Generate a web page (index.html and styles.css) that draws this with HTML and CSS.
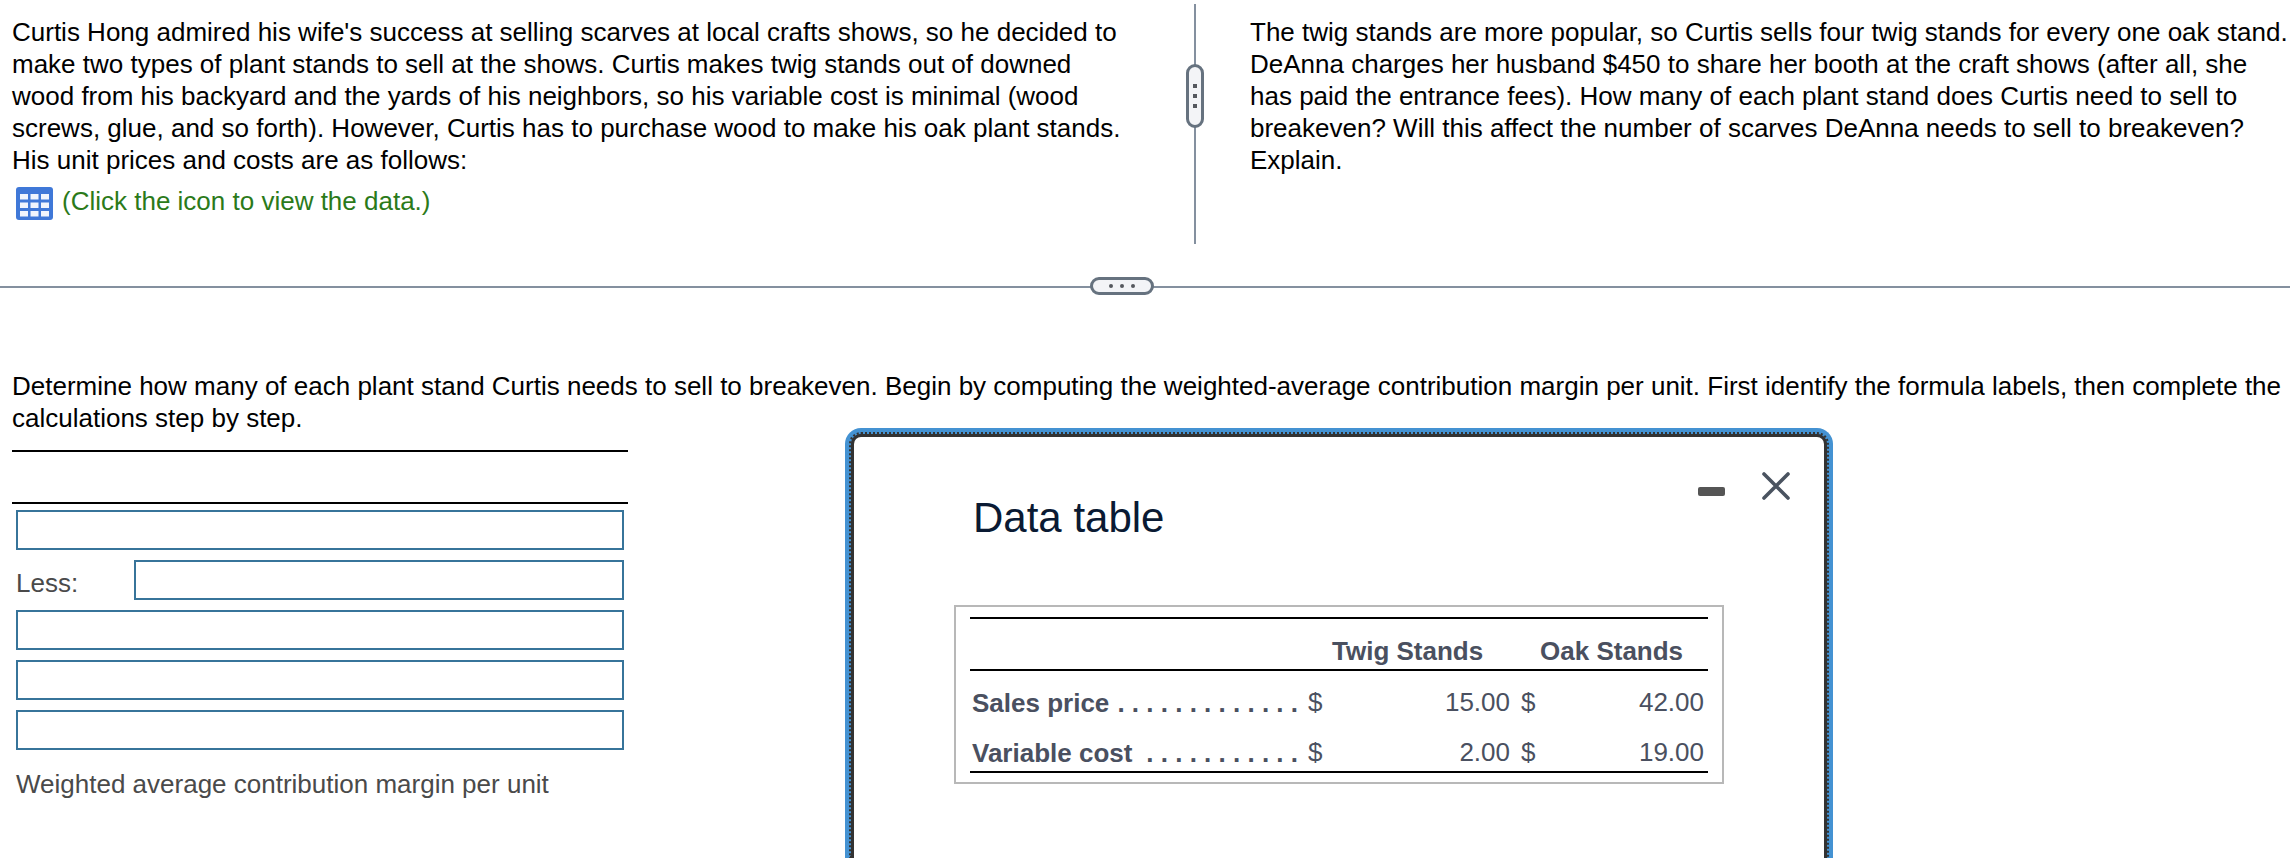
FILE: index.html
```html
<!DOCTYPE html>
<html lang="en">
<head>
<meta charset="utf-8">
<title>Data table</title>
<link rel="stylesheet" href="styles.css">
</head>
<body>
<section class="top">
  <div class="pane pane-left">
    <p class="para">Curtis Hong admired his wife's success at selling scarves at local crafts shows, so he decided to make two types of plant stands to sell at the shows. Curtis makes twig stands out of downed wood from his backyard and the yards of his neighbors, so his variable cost is minimal (wood screws, glue, and so forth). However, Curtis has to purchase wood to make his oak plant stands. His unit prices and costs are as follows:</p>
    <div class="data-link">
      <svg class="grid-icon" viewBox="0 0 37 33" aria-hidden="true">
        <rect x="0" y="0" width="37" height="33" rx="3" fill="#3f78d8"/>
        <g fill="#f0f5fd">
          <rect x="4" y="7" width="8" height="5.5"/><rect x="14.5" y="7" width="8" height="5.5"/><rect x="25" y="7" width="8" height="5.5"/>
          <rect x="4" y="15.5" width="8" height="5.5"/><rect x="14.5" y="15.5" width="8" height="5.5"/><rect x="25" y="15.5" width="8" height="5.5"/>
          <rect x="4" y="24" width="8" height="5.5"/><rect x="14.5" y="24" width="8" height="5.5"/><rect x="25" y="24" width="8" height="5.5"/>
        </g>
      </svg>
      <span class="link-text">(Click the icon to view the data.)</span>
    </div>
  </div>
  <div class="v-split">
    <div class="v-handle"><i></i><i></i><i></i></div>
  </div>
  <div class="pane pane-right">
    <p class="para">The twig stands are more popular, so Curtis sells four twig stands for every one oak stand. DeAnna charges her husband $450 to share her booth at the craft shows (after all, she has paid the entrance fees). How many of each plant stand does Curtis need to sell to breakeven? Will this affect the number of scarves DeAnna needs to sell to breakeven? Explain.</p>
  </div>
</section>
<div class="h-split">
  <div class="h-handle"><i></i><i></i><i></i></div>
</div>
<section class="bottom">
  <p class="para prompt">Determine how many of each plant stand Curtis needs to sell to breakeven. Begin by computing the weighted-average contribution margin per unit. First identify the formula labels, then complete the calculations step by step.</p>
  <div class="calc">
    <div class="calc-head"></div>
    <div class="calc-row"><div class="box"></div></div>
    <div class="calc-row"><span class="calc-label less">Less:</span><div class="box"></div></div>
    <div class="calc-row"><div class="box"></div></div>
    <div class="calc-row"><div class="box"></div></div>
    <div class="calc-row"><div class="box"></div></div>
    <div class="calc-label total">Weighted average contribution margin per unit</div>
  </div>
</section>
<div class="modal">
  <div class="modal-dots">
    <div class="modal-body">
      <div class="modal-head">
        <h2 class="modal-title">Data table</h2>
        <div class="modal-actions">
          <span class="minimize"></span>
          <svg class="close" viewBox="0 0 28 28" aria-hidden="true"><path d="M2 2 L26 26 M26 2 L2 26" fill="none" stroke="#4a5360" stroke-width="3.6" stroke-linecap="round"/></svg>
        </div>
      </div>
      <div class="table-box">
        <table class="data">
          <colgroup><col class="c-label"><col class="c-cur"><col class="c-num"><col class="c-cur"><col class="c-num2"></colgroup>
          <thead>
            <tr><th></th><th colspan="2" class="head-twig">Twig Stands</th><th colspan="2" class="head-oak">Oak Stands</th></tr>
          </thead>
          <tbody>
            <tr><td class="row-label">Sales price <span class="dots">. . . . . . . . . . . . .</span></td><td>$</td><td class="num">15.00</td><td>$</td><td class="num last">42.00</td></tr>
            <tr><td class="row-label">Variable cost <span class="dots">. . . . . . . . . . .</span></td><td>$</td><td class="num">2.00</td><td>$</td><td class="num last">19.00</td></tr>
          </tbody>
        </table>
      </div>
    </div>
  </div>
</div>
</body>
</html>
```
FILE: styles.css
```css
* { box-sizing: border-box; }
html, body { height: 100%; }
body {
  margin: 0;
  background: #fff;
  color: #000;
  font-family: "Liberation Sans", Arial, sans-serif;
  font-size: 26px;
  line-height: 32px;
  overflow: hidden;
  position: relative;
}
.para { margin: 0; }
.top { display: flex; height: 286px; }
.pane { padding-top: 16px; }
.pane-left { width: 1194px; padding-left: 12px; padding-right: 62px; flex: none; }
.pane-right { flex: 1; padding-left: 54px; min-width: 0; }
.data-link { display: flex; align-items: center; gap: 9px; margin-top: 11px; height: 33px; padding-left: 4px; }
.grid-icon { width: 37px; height: 33px; flex: none; }
.link-text { color: #2b7a1a; padding-bottom: 6px; }
.v-split {
  width: 2px;
  flex: none;
  height: 240px;
  margin-top: 4px;
  background: #84909f;
  position: relative;
}
.v-handle {
  position: absolute;
  left: -8px;
  top: 60px;
  width: 18px;
  height: 64px;
  border: 3px solid #66727f;
  border-radius: 9px;
  background: #f3f4f7;
  display: flex;
  flex-direction: column;
  align-items: center;
  justify-content: center;
  gap: 6px;
}
.v-handle i { width: 4px; height: 4px; background: #55585e; display: block; }
.h-split { height: 2px; background: #84909f; position: relative; }
.h-handle {
  position: absolute;
  left: 1090px;
  top: -9px;
  width: 64px;
  height: 18px;
  border: 3px solid #66727f;
  border-radius: 9px;
  background: #f3f4f7;
  display: flex;
  align-items: center;
  justify-content: center;
  gap: 7px;
}
.h-handle i { width: 4px; height: 4px; border-radius: 50%; background: #55585e; display: block; }
.bottom { padding: 82px 0 0 12px; }
.prompt { margin-bottom: 16px; }
.calc { width: 616px; }
.calc-head {
  height: 54px;
  border-top: 2px solid #000;
  border-bottom: 2px solid #000;
  margin-bottom: 6px;
}
.calc-row { display: flex; height: 40px; margin: 0 4px 10px; }
.box { flex: 1; border: 2px solid #37749a; background: #fff; }
.calc-label { color: #4a4a4a; }
.less { width: 118px; flex: none; padding-top: 7px; }
.total { margin: 18px 4px 0; white-space: nowrap; }
.modal {
  position: absolute;
  left: 845px;
  top: 428px;
  width: 988px;
  height: 430px;
  border: 4px solid #4492d2;
  border-bottom: 0;
  border-radius: 16px 16px 0 0;
  background: #4492d2;
}
.modal-dots {
  height: 100%;
  border: 2px dotted #333;
  border-bottom: 0;
  border-radius: 12px 12px 0 0;
  background: #333;
  background-clip: padding-box;
}
.modal-body {
  height: 100%;
  border: 3px solid #333;
  border-bottom: 0;
  border-radius: 10px 10px 0 0;
  background: #fff;
  padding-left: 100px;
  color: #4a5060;
}
.modal-head { position: relative; height: 168px; padding-top: 55px; padding-left: 19px; }
.modal-title { margin: 0; font-size: 42px; line-height: 52px; font-weight: 400; color: #0a1a33; }
.modal-actions { position: absolute; left: 0; top: 0; }
.minimize {
  position: absolute;
  left: 744px;
  top: 50px;
  width: 27px;
  height: 9px;
  border-radius: 2px;
  background: #555;
}
.close { position: absolute; left: 808px; top: 35px; width: 28px; height: 28px; }
.table-box {
  width: 770px;
  height: 179px;
  border: 2px solid #b8b8b8;
  padding: 10px 14px;
  background: #fff;
}
.data { width: 738px; border-collapse: collapse; table-layout: fixed; border-top: 2px solid #000; border-bottom: 2px solid #000; }
.c-label { width: 338px; }
.c-cur { width: 50px; }
.c-num { width: 163px; }
.c-num2 { width: 137px; }
.data th { height: 52px; font-weight: 700; border-bottom: 2px solid #000; padding: 13px 0 0; text-align: left; }
.data th.head-twig { padding-left: 24px; }
.data th.head-oak { padding-left: 19px; }
.data td { height: 51px; padding: 12px 0 0; text-align: left; }
.data td.row-label { font-weight: 700; padding: 14px 10px 0 2px; white-space: nowrap; overflow: hidden; }
.dots { float: right; }
.data td.num { text-align: right; padding-right: 11px; }
.data td.num.last { padding-right: 4px; }
```
